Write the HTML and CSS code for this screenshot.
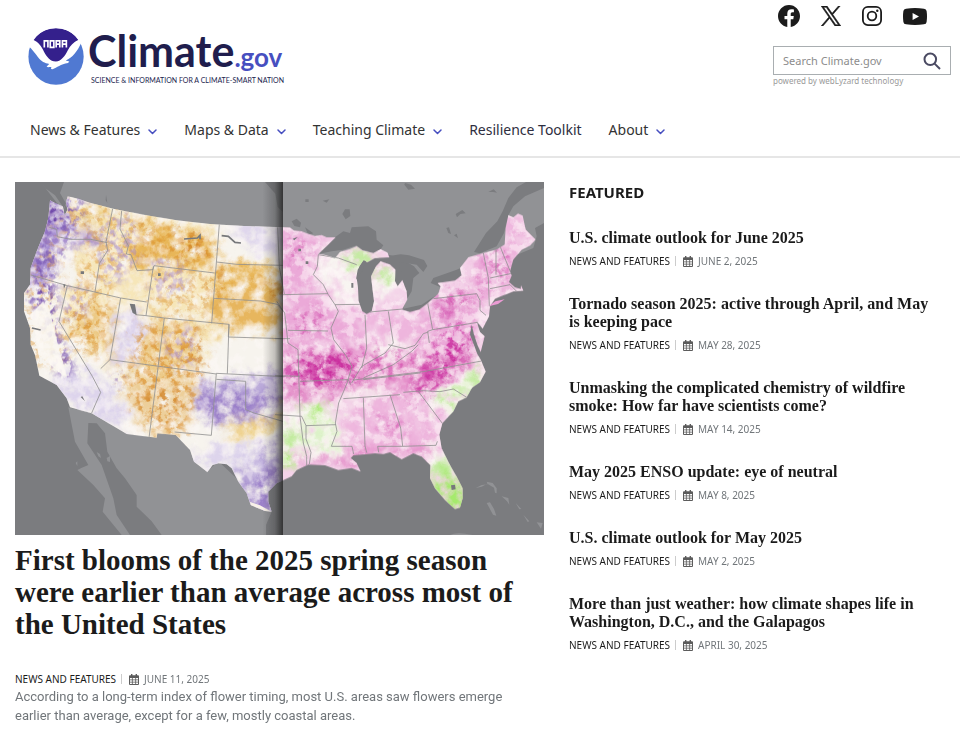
FILE: index.html
```html
<!DOCTYPE html>
<html lang="en">
<head>
<meta charset="utf-8">
<meta name="viewport" content="width=device-width, initial-scale=1">
<title>Climate.gov</title>
<link rel="stylesheet" href="styles.css">
</head>
<body>
<svg class="sprite" aria-hidden="true">
  <symbol id="chevron" viewBox="0 0 9 6"><path d="M1 1l3.5 3.5L8 1" fill="none" stroke="currentColor" stroke-width="1.5" stroke-linecap="round" stroke-linejoin="round"/></symbol>
  <symbol id="calendar" viewBox="0 0 10 11"><path fill="currentColor" fill-rule="evenodd" d="M2 0h1.4v1.2h3.2V0H8v1.2h1q1 0 1 1V10q0 1-1 1H1q-1 0-1-1V2.200q0-1 1-1h1zM1 4v1.500h1.900V4zm2.700 0v1.500h2.600V4zm3.400 0v1.500H9V4zM1 6.300v1.500h1.900V6.300zm2.700 0v1.500h2.600V6.300zm3.400 0v1.500H9V6.300zM1 8.600V10h1.900V8.600zm2.700 0V10h2.600V8.600zm3.400 0V10H9V8.600z"/></symbol>
</svg>
<header class="site-header">
  <div class="masthead">
    <a class="logo" href="#">
      <svg class="logo-mark" viewBox="39 38 169 173" role="img" aria-label="NOAA">
        <defs><clipPath id="disc"><ellipse cx="123.500" cy="124.500" rx="84" ry="86"/></clipPath></defs>
        <g clip-path="url(#disc)">
          <path fill="#fff" d="M39 38h169v173H39z"/>
          <path fill="#34208c" d="M54 74Q80 38 123 38t69 36c-16 8-25 18-33 32-8 16-19 32-36 34-18-1-27-14-36-30-8-17-17-29-33-36z"/>
          <path fill="#5079d2" d="M39 92c13 12 21 22 30 35 10 13 20 18 34 20l-8 8c4 4 10 0 15 2-3 3-2 7 3 6 14-6 24-15 47-19l4-4-11-3c20-8 36-29 47-54l12 0v130H39z"/>
        </g>
        <path d="M88 97V77h11v20M106 77h11v20h-11zM124 97V77h11v20M124 87h11M143 97V77h12v20M143 87h12" fill="none" stroke="#fff" stroke-width="5"/>
      </svg>
      <span class="logo-words">
        <span class="logo-name">Climate<span class="logo-tld">.gov</span></span>
        <span class="logo-tag">SCIENCE &amp; INFORMATION FOR A CLIMATE-SMART NATION</span>
      </span>
    </a>
    <div class="tools">
      <div class="social">
        <a href="#" aria-label="Facebook"><svg width="22" height="22" viewBox="0 0 24 24"><path fill="currentColor" d="M24 12.070C24 5.400 18.630 0 12 0S0 5.400 0 12.070c0 6.030 4.390 11.020 10.130 11.930v-8.440H7.080v-3.490h3.050V9.410c0-3.020 1.790-4.690 4.530-4.690 1.310 0 2.690.24 2.690.24v2.970h-1.520c-1.490 0-1.950.93-1.950 1.890v2.260h3.330l-.53 3.490h-2.800V24C19.610 23.090 24 18.100 24 12.070z"/></svg></a>
        <a href="#" aria-label="X"><svg width="20" height="20" viewBox="0 0 24 24"><path fill="currentColor" stroke="currentColor" stroke-width=".7" d="M14.230 10.160L22.980 0h-2.070l-7.600 8.820L7.250 0H.250l9.180 13.340L.250 24h2.070l8.030-9.320L16.760 24h7zM11.390 13.460l-.930-1.330L3.070 1.560h3.180l5.970 8.540.93 1.330 7.760 11.100h-3.180z"/></svg></a>
        <a href="#" aria-label="Instagram"><svg width="20" height="20" viewBox="0 0 20 20"><g fill="none" stroke="currentColor" stroke-width="1.800"><rect x=".9" y=".9" width="18.200" height="18.200" rx="5"/><circle cx="10" cy="10" r="4.300"/></g><circle cx="15.300" cy="4.700" r="1.200" fill="currentColor"/></svg></a>
        <a href="#" aria-label="YouTube"><svg width="24" height="17" viewBox="0 0 24 18" preserveAspectRatio="none"><path fill="currentColor" fill-rule="evenodd" d="M3 .7Q12-.5 21 .7q2.300.4 2.600 2.600.8 5.700 0 11.400-.3 2.200-2.600 2.600-9 1.200-18 0-2.300-.4-2.600-2.600-.8-5.700 0-11.400Q.7 1.100 3 .7zM9.600 5.200v7.600L16 9z"/></svg></a>
      </div>
      <form class="search">
        <input type="search" aria-label="Search Climate.gov" placeholder="Search Climate.gov">
        <button type="button" aria-label="Search"><svg width="18" height="18" viewBox="0 0 18 18"><g fill="none" stroke="currentColor" stroke-width="2"><circle cx="7.300" cy="7.300" r="5.800"/><path d="M11.600 11.600l5.400 5.400"/></g></svg></button>
      </form>
      <p class="powered">powered by webLyzard technology</p>
    </div>
  </div>
  <nav class="nav">
    <a href="#">News &amp; Features<svg class="chev"><use href="#chevron"/></svg></a>
    <a href="#">Maps &amp; Data<svg class="chev"><use href="#chevron"/></svg></a>
    <a href="#">Teaching Climate<svg class="chev"><use href="#chevron"/></svg></a>
    <a class="toolkit" href="#">Resilience Toolkit</a>
    <a href="#">About<svg class="chev"><use href="#chevron"/></svg></a>
  </nav>
</header>
<main class="content">
  <article class="lead">
    <svg class="map" viewBox="15 12 1587 1059" role="img" aria-label="Map of spring bloom timing across the United States">
      <defs>
        <path id="usa" d="M120 67L135 75 158 85 164 112 172 95 168 72 173 55 205 62 240 74 310 92 400 110 500 127 600 138 700 144 819 148 840 149 852 158 875 160 890 166 915 174 935 171 950 178 977 178 925 228 940 230 975 240 990 222 1020 213 1040 205 1058 218 1090 225 1112 214 1132 224 1138 238 1095 240 1072 252 1060 248 1048 265 1040 300 1044 330 1046 370 1057 400 1070 408 1085 400 1092 370 1087 330 1083 295 1098 265 1112 250 1140 260 1156 275 1155 310 1163 325 1177 306 1190 340 1192 365 1176 395 1200 402 1228 395 1252 377 1285 347 1292 325 1283 315 1335 308 1355 292 1350 270 1375 238 1420 225 1460 215 1484 200 1487 150 1495 112 1510 118 1524 107 1538 113 1547 155 1577 185 1560 203 1535 215 1510 245 1500 280 1505 293 1497 312 1515 328 1532 333 1533 322 1540 338 1510 340 1490 348 1455 362 1440 385 1437 415 1418 452 1400 430 1410 462 1424 475 1412 522 1402 500 1392 470 1385 440 1380 470 1402 528 1412 545 1427 581 1410 612 1386 629 1370 658 1345 670 1330 700 1297 736 1288 770 1295 811 1320 861 1340 896 1358 931 1358 961 1350 989 1335 993 1305 966 1275 931 1260 901 1261 861 1235 836 1210 826 1175 844 1140 823 1120 828 1095 826 1065 829 1030 832 1022 840 1040 855 1052 881 1025 870 985 876 945 862 895 860 860 876 845 895 819 907 800 916 775 941 775 971 785 1001 765 999 722 981 710 946 685 911 665 871 650 859 625 856 608 861 592 882 552 851 540 816 497 771 442 766 440 779 350 768 245 706 180 688 170 661 140 621 88 593 75 531 62 500 60 450 42 400 42 345 60 320 62 270 80 220 105 160 115 120z"/>
        <clipPath id="usClip"><use href="#usa"/></clipPath>
        <clipPath id="westHalf"><path d="M15 12h804v1059H15z"/></clipPath>
        <clipPath id="eastHalf"><path d="M819 12h783v1059H819z"/></clipPath>
        <filter id="soft" x="-20%" y="-20%" width="140%" height="140%" color-interpolation-filters="sRGB">
          <feGaussianBlur in="SourceGraphic" stdDeviation="14" result="b"/>
          <feTurbulence type="fractalNoise" baseFrequency=".025" numOctaves="5" seed="8" result="n"/>
          <feDisplacementMap in="b" in2="n" scale="80" xChannelSelector="R" yChannelSelector="G" result="d"/>
          <feColorMatrix in="n" values="0 0 0 0 0 0 0 0 0 0 0 0 0 0 0 0 0 2.500 0 -.4" result="a"/>
          <feComposite in="d" in2="a" operator="in"/>
        </filter>
        <filter id="speck" x="-20%" y="-20%" width="140%" height="140%" color-interpolation-filters="sRGB">
          <feGaussianBlur in="SourceGraphic" stdDeviation="18" result="b"/>
          <feTurbulence type="fractalNoise" baseFrequency=".045" numOctaves="4" seed="23" result="n"/>
          <feDisplacementMap in="b" in2="n" scale="70" xChannelSelector="R" yChannelSelector="B" result="d"/>
          <feColorMatrix in="n" values="0 0 0 0 0 0 0 0 0 0 0 0 0 0 0 0 5 0 0 -2.300" result="a"/>
          <feComposite in="d" in2="a" operator="in"/>
        </filter>
        <filter id="speckB" x="-20%" y="-20%" width="140%" height="140%" color-interpolation-filters="sRGB">
          <feGaussianBlur in="SourceGraphic" stdDeviation="14" result="b"/>
          <feTurbulence type="fractalNoise" baseFrequency=".05" numOctaves="4" seed="71" result="n"/>
          <feDisplacementMap in="b" in2="n" scale="60" xChannelSelector="R" yChannelSelector="B" result="d"/>
          <feColorMatrix in="n" values="0 0 0 0 0 0 0 0 0 0 0 0 0 0 0 6 0 0 0 -2.800" result="a"/>
          <feComposite in="d" in2="a" operator="in"/>
        </filter>
        <filter id="mottle" x="0" y="0" width="100%" height="100%" color-interpolation-filters="sRGB">
          <feTurbulence type="fractalNoise" baseFrequency=".03" numOctaves="5" seed="5" result="n"/>
          <feColorMatrix in="n" values="0 0 0 0 1 0 0 0 0 .98 0 0 0 0 .98 0 6 0 0 -2.900" result="a"/>
          <feComposite in="a" in2="SourceGraphic" operator="in"/>
        </filter>
        <linearGradient id="fold"><stop offset="0" stop-color="#222" stop-opacity="0"/><stop offset=".6" stop-color="#222" stop-opacity=".25"/><stop offset="1" stop-color="#222" stop-opacity=".8"/></linearGradient>
      </defs>
      <path fill="#7b7c7f" d="M15 12h1587v1059H15z"/>
      <g fill="#919295">
        <path d="M92 12L108 32 135 52 160 88 170 80 150 45 162 12H1548L1520 28 1495 60 1478 100 1462 130 1428 165 1392 222 1410 226 1460 205 1482 165 1495 112 1510 85 1545 55 1602 30V135L1575 150 1580 175 1570 210 1485 245 1375 260 1340 275 1270 300 1262 315 1292 328 1285 347 1235 380 1180 392 1188 368 1205 340 1210 300 1228 285 1212 265 1170 240 1128 228 1090 216 1040 230 977 240 800 240 173 160V58L160 100z"/>
        <path d="M175 688L245 704 350 768 497 765 560 840 592 880 625 850 700 920 785 1001 768 1041V1071H455L425 1030 380 986 380 951 345 901 320 871 292 821 285 766 260 736 235 735 232 796 275 861 310 961 320 1011 360 1071H335L278 1001 285 961 250 921 202 876 214 870 235 861 195 791z"/>
        <path d="M1397 930l18-9 18-2-3-8 18 4 12 16v15l-5-2-3-15-20-12-17 9zM1430 975l10-2 12 20 7 20-10-3-12-22zM1475 955l20 5 3 20-7-10zM1517 975l17 18-6 1zM1540 1010l18 20-5 2zM1580 1033l18 2-5 17zM1320 1071q20-10 68 0z"/>
        <path d="M260 822l10 6 3 12-8-5zM290 840l10-6v18l-8-2zM197 855l5-5v14z"/>
      </g>
      <g fill="#7b7c7f">
        <path d="M925 228L975 178 1000 160 1020 165 1025 148 1075 145 1098 160 1100 185 1120 202 1112 214 1090 222 1058 215 1040 202 1000 215 965 220zM1097 235l45-2 30-4 25 3 45 14 10 18-12 18-20-22-50-8-3 18 22 30 10 22-5 36-20-30-20-35-25-40-35-10z"/>
        <path d="M997 108l8-14h14l2 20-14 10zM1185 15l18 5 12 12-20 3-12-15zM845 130l15-8 13 12-3 14-17-4zM885 148l25 18-15 5zM1337 108l20-12 10 10-16 2-10 10zM1435 42l16-8 10 10-12-2zM1309 150l8-2 6 20-8-3zM1332 172l8-5 4 14zM938 68l20-4-8 10zM886 64h10v8h-10zM765 12h54v90l-16-15-7-40zM288 50l4 25-5-8z"/>
      </g>
      <g clip-path="url(#usClip)">
        <g clip-path="url(#westHalf)">
          <path fill="#f7f4ee" d="M15 12h804v1059H15z"/>
          <g filter="url(#soft)">
            <path fill="#f5dfa2" d="M200 80l180 30 240 30 10 120h195v200H640L560 560 380 620 250 530 130 440 190 300z" opacity=".7"/>
            <path fill="#e8b658" d="M400 130l90 20 130 30v90l-200 10-80-50zM615 250l80 10 130 20v190l-220-20z"/>
            <path fill="#e6b562" opacity=".6" d="M180 400l130-20v150l-80-30zM415 420l150 20v240l-60 90h-90l-80-140zM600 340h230v110H610z"/>
            <path fill="#eecf84" d="M650 700l175-50v80l-90 50-80-10zM190 90l90-5 20 60-90 20z"/>
            <path fill="#baa9d9" d="M535 690l50-80 250-30v105l-100 40-110 15zM640 840l195-60v230h-100l-60-80z"/>
            <path fill="#9b80c9" d="M555 690l50-50 225 20-80 40-110 30zM700 940l60-60 70-20v90l-60 60-30-10z"/>
            <path fill="#ddd4ec" d="M110 620l130-60 120 150-20 50-170-80zM650 140l180 0v100l-90-20zM330 380l60 20 30 60-80 120-40-40zM540 840l110-60 90 20v60l-100 10-80 20z"/>
            <path fill="#a48bd0" d="M110 60l60 20 10 70 110 20-60 30-100-10-30 120-60-20z"/>
            <path fill="#a48bd0" d="M100 170l50 0-20 100-30 60-50-10z"/>
          </g>
          <g filter="url(#speck)" opacity=".75">
            <path fill="#d98a20" opacity=".6" d="M300 100l100 20 170 60 50 90-170-10-120-10-80 280-110-20 40-200z"/>
            <path fill="#d98a20" opacity=".8" d="M400 420l160 20 10 160-50 180-110-20-80-150z"/>
            <path fill="#d98a20" opacity=".6" d="M180 70l120 20-20 90-120-20-50 280 60 110-110 20-30-220zM170 400l140-20-20 160-80-20zM420 280l190 10v130l-190-20z"/>
            <path fill="#cf7a18" d="M400 120l30 60-30 10zM380 650l120-30 0 100-70 20zM540 450l30 0 10 140-40-10zM500 160l100 20-10 60-90-10zM730 300l90 20v60zM600 290l50 0 0 60-40 0z"/>
          </g>
          <g filter="url(#speckB)" opacity=".85">
            <path fill="#7e5db8" d="M110 60l130 0-40 110-60 100 10 190 60 130-50 10-50-150-50-100z"/>
            <path fill="#a68ccf" opacity=".7" d="M290 110l90 10 20 120-70 80-60-20zM430 240l110 20-10 100-100-20zM470 480l90-40v120l-70 10zM110 150l180 20-30 30-150 20zM170 330l80-10-20 110-60-10z"/>
            <path fill="#5c2f9c" d="M80 285l60 30 15 170-40-80zM320 590l25-5 5 25-25 10zM120 70l40 20 20 40-50 20zM120 440l40 60 20 80-30 10z"/>
          </g>
          <path d="M110 365l20 80 18 70 22 80-15-5-70-60-15-100zM60 410l40-40 30 110 10 70-50-40z" fill="#f9f6ef" opacity=".9"/>
          <path d="M720 972l30 10 36 20-15 6-45-12z" fill="#f8f1e8"/>
          <path d="M15 12h804v1059H15z" filter="url(#mottle)" opacity=".4"/>
        </g>
        <g clip-path="url(#eastHalf)">
          <path fill="#f4d3e9" d="M819 12h783v1059H819z"/>
          <g filter="url(#soft)">
            <path fill="#eba9d8" d="M780 150l170 20-30 60-20 110h60l30 200-20 100H780zM960 380l100 20v150H950zM1220 380l180-50 20 60-30 80-60 60-110-10zM1380 250l130-40 40 90-100 60-70-20z"/>
            <path fill="#eeb5dd" d="M1070 400l170 0v230H1070zM1010 660l270 0 20 150-130 20H1010zM1480 110l60 0 20 100-60 60z"/>
            <path fill="#e490ca" opacity=".9" d="M780 520h290l200 10 120-10-60 100-260 50-290 10zM870 830l160-20 240-20v40l-400 50z"/>
            <path fill="#f8f5f1" d="M930 235l110-10 10 150h-50l-60-60zM1090 290l60-10 20 60-70 40zM1240 640l140-70 40 60-60 80-100-10zM780 690l150-10 60 40v120l-210 0zM1255 800l60 0 40 90-90-10zM1000 640l120-20-10 40-110 20zM1085 500l120-20v40l-120 20z"/>
          </g>
          <g filter="url(#speck)" opacity=".9">
            <path fill="#c8219a" opacity=".85" d="M860 540l140 -20 50 20-20 60-100 40-60-20zM1290 470l60-40 40 20-10 80-60 60-90 90-30 0 40-90z"/>
            <path fill="#c8219a" opacity=".5" d="M790 530l260 0 70-10 80 0 50 0-30 70-200 20-230 20z"/>
            <path fill="#cc3ba2" opacity=".7" d="M830 180l50 20 10 60-60-20zM860 410l70-10 10 60-80 10zM1270 370l130-50 20 30-60 40-70 10zM1420 220l60 0 20 60-60 50z"/>
          </g>
          <g filter="url(#soft)">
            <path fill="#c82b9c" opacity=".6" d="M870 545l130-10 40 50-130 30-40-10zM1210 590l80-60 80-50-10 80-120 80-40-20zM1275 365l60-5 20 40-60 10zM1120 715l50 10-10 40-40-10z"/>
            <path fill="#c3eba0" d="M1000 220l100-15-10 40-40 30-60-20zM1070 260l80 0-10 45-70 0zM1290 640l80-20-20 70-50 10zM1380 560l60 20-10 70-60 0zM880 670l80-5-10 60-70-10zM790 760l90-20-20 100-70 10zM1240 870l80-30 80 150h-90l-80-80z"/>
            <path fill="#a5ea6c" d="M1250 910l90-20 60 110-80 20zM900 680l50 0-10 35-40 5zM790 810l50 0v50h-50z"/>
            <path fill="#dcf2c8" d="M890 740l90-10v80l-90 10z"/>
          </g>
          <path d="M819 12h783v850H819z" filter="url(#mottle)" opacity=".5"/>
        </g>
        <g fill="none" stroke="#909090" stroke-width="3" stroke-opacity=".8" stroke-linejoin="round">
          <path d="M118 148l22 6 2 22 40 8 60 0 50 10M308 92l-20 100 5 25-25 40-13 85M62 291l110 32 160 37 78 12M172 323l-25 107 100 165 25 48-27 62M332 360l-32 185-28 27M335 98l-5 55 25 50-6 25 14 2 18 48 48-3 3-12 182 22M430 265l-22 148 55 7 194 19-5 148M408 413l-32-3M463 420l-16 125-30 235M300 545l147 20 172 23M628 138l-23 298M620 252l60 7 139 3M612 361l140 8 50 10 17 20M657 439l-2 38 164 5M619 586l205 10M619 604l88 6 0 85 25 10 87 25M619 586l-15 186-110-10M803 148l5 120 15 80M800 370l24 35 10 90 30 20 6 200 10 80 10 40v50M819 350l135-3M834 457l120 2M795 482h45M795 593l75 2M925 230l-3 35-12 25 30 30 15 30 20 30 75-1M975 380l10 20-22 50 8 35 35 45 20 35-15 50-10 25-15 35-10 60 5 25-17 45 62 0 5 23M870 610l145-5 7 15M795 710l80 5 13 28 90-3M888 743v40l15 40-5 35M1000 662l170-12M1060 659l5 145 5 20M1065 410l5 100-15 60M1068 403l110-10M1135 400l15 95-25 30-70 40-30 50M1135 500l50 12 30-10 25-35 15-5M1253 375l15 80 135-22M1268 455l-15 5 5 35M1225 500l-20 20-55 40-90 40M1030 606l210-25 175-32M1060 605l170-20M1140 650l32 100 6 55 100-3 4-12M1178 805h-75l3 18M1180 643l60-5 50 3 40-8 45 28M1225 640l75 100M1270 362l130-15 10 20 0 30 18 15M1420 225l15 75 3 85M1458 215v75M1470 205l32 78M1440 300l70-15M1440 332l60-12 20 20M925 230l60 10 55 20"/>
        </g>
        <g fill="#77787b"><path d="M359 377l16 2 5 32-12-6zM212 657l5-2 8 15zM212 280h10v8h-10zM444 286h8v8h-8zM160 318l7 2-5 12zM1323 922l12-2 2 14-12 2zM887 250h8v8h-8zM848 182l15-5-10 10zM865 212h8v8h-8z"/><path d="M522 183l40-3 8-8v12M635 173l20 2 20 18 18 2M66 450l26 6" fill="none" stroke="#77787b" stroke-width="5"/></g>
      </g>
      <path fill="#7b7c7f" d="M1038 305l5-30 18-28 7 3-12 30zM1024 315h6v14h-6z"/>
      <path fill="#eb9bd4" d="M1436 385l20-15 28-6-20 14z"/>
      <path fill="url(#fold)" d="M758 12h61v1059h-61z"/>
    </svg>
    <h1><a href="#">First blooms of the 2025 spring season were earlier than average across most of the United States</a></h1>
    <p class="meta"><a href="#">NEWS AND FEATURES</a><time datetime="2025-06-11"><svg class="cal"><use href="#calendar"/></svg>JUNE 11, 2025</time></p>
    <p class="summary">According to a long-term index of flower timing, most U.S. areas saw flowers emerge earlier than average, except for a few, mostly coastal areas.</p>
  </article>
  <section class="featured">
    <h2>FEATURED</h2>
    <article><h3><a href="#">U.S. climate outlook for June 2025</a></h3><p class="meta"><a href="#">NEWS AND FEATURES</a><time datetime="2025-06-02"><svg class="cal"><use href="#calendar"/></svg>JUNE 2, 2025</time></p></article>
    <article><h3><a href="#">Tornado season 2025: active through April, and May is keeping pace</a></h3><p class="meta"><a href="#">NEWS AND FEATURES</a><time datetime="2025-05-28"><svg class="cal"><use href="#calendar"/></svg>MAY 28, 2025</time></p></article>
    <article><h3><a href="#">Unmasking the complicated chemistry of wildfire smoke: How far have scientists come?</a></h3><p class="meta"><a href="#">NEWS AND FEATURES</a><time datetime="2025-05-14"><svg class="cal"><use href="#calendar"/></svg>MAY 14, 2025</time></p></article>
    <article><h3><a href="#">May 2025 ENSO update: eye of neutral</a></h3><p class="meta"><a href="#">NEWS AND FEATURES</a><time datetime="2025-05-08"><svg class="cal"><use href="#calendar"/></svg>MAY 8, 2025</time></p></article>
    <article><h3><a href="#">U.S. climate outlook for May 2025</a></h3><p class="meta"><a href="#">NEWS AND FEATURES</a><time datetime="2025-05-02"><svg class="cal"><use href="#calendar"/></svg>MAY 2, 2025</time></p></article>
    <article><h3><a href="#">More than just weather: how climate shapes life in Washington, D.C., and the Galapagos</a></h3><p class="meta"><a href="#">NEWS AND FEATURES</a><time datetime="2025-04-30"><svg class="cal"><use href="#calendar"/></svg>APRIL 30, 2025</time></p></article>
  </section>
</main>
</body>
</html>
```
FILE: styles.css
```css
* { box-sizing: border-box; }
body { margin: 0; background: #fff; color: #1b1b1b; font-family: "Noto Sans", "Open Sans", sans-serif; }
a { color: inherit; text-decoration: none; }
h1, h2, h3, p { margin: 0; }
svg { display: block; }
.sprite { position: absolute; width: 0; height: 0; }

.site-header { border-bottom: 2px solid #e6e6e6; }
.masthead { display: flex; justify-content: space-between; align-items: flex-start; padding: 4px 9px 0 28px; height: 114px; }
.logo { display: flex; gap: 4px; margin-top: 24px; font-family: Lato, sans-serif; }
.logo-mark { width: 56px; height: 57px; }
.logo-words { display: flex; flex-direction: column; }
.logo-name { height: 46px; font-size: 43px; line-height: 46px; font-weight: 700; color: #201d4d; }
.logo-tld { font-size: 26px; line-height: 26px; color: #474fc0; }
.logo-tag { font-size: 7px; line-height: 12px; padding-left: 3px; color: #201d4d; white-space: nowrap; }

.tools { width: 178px; }
.social { display: flex; align-items: center; gap: 21px; height: 24px; padding-left: 5px; color: #1b1b1b; }
.search { display: flex; align-items: center; height: 29px; margin-top: 18px; border: 1px solid #a9aeb1; }
.search input { flex: 1; min-width: 0; border: 0; padding: 0 0 0 9px; font: 11px "Noto Sans", sans-serif; color: #1b1b1b; background: none; outline: 0; }
.search input::placeholder { color: #8c8c8c; opacity: 1; }
.search button { border: 0; padding: 0 9px; background: none; color: #4a4a62; }
.powered { font-size: 8px; line-height: 12px; color: #999; white-space: nowrap; }

.nav { display: flex; gap: 27px; padding: 5px 30px 15px; font-size: 14px; line-height: 22px; color: #333; }
.nav a { display: flex; align-items: center; gap: 8px; white-space: nowrap; }
.nav .toolkit { color: #2e2e40; }
.chev { width: 9px; height: 6px; margin-top: 3px; color: #474fc0; }

.content { display: grid; grid-template-columns: 529fr 376fr; gap: 25px; padding: 24px 15px 14px; }
.map { width: 100%; height: auto; }
h1, h3 { font-family: "Liberation Serif", serif; font-weight: 700; }
h1 { font-size: 29px; line-height: 32px; margin: 9px 0 31px; }
h2 { font-size: 15px; line-height: 20px; margin-bottom: 27px; }
h3 { font-size: 16px; line-height: 18px; margin-bottom: 6px; }
.meta { display: flex; align-items: center; font-size: 10px; line-height: 16px; white-space: nowrap; }
.meta time { display: flex; align-items: center; gap: 5px; margin-left: 5px; color: #71767a; }
.meta time::before { content: ""; width: 1px; height: 10px; margin-right: 2px; background: #ccc; }
.cal { width: 10px; height: 11px; color: #5c5c5c; }
.summary { padding-right: 24px; font-family: Roboto, sans-serif; font-size: 13px; line-height: 19px; color: #71767a; }
.featured { padding-right: 10px; }
.featured article { margin-bottom: 26px; }
```
